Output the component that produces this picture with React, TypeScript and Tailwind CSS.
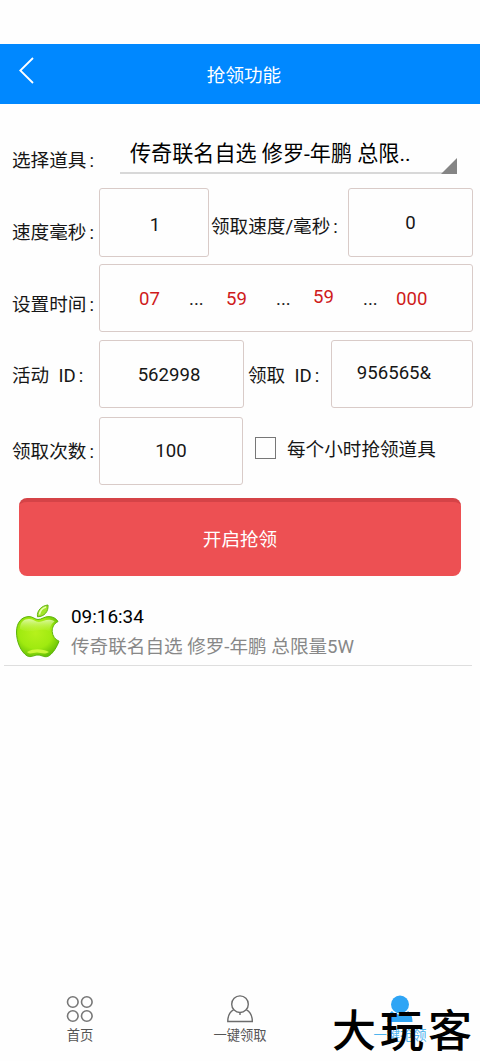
import React from "react"

const FONT = "font-[Roboto,'Noto_Sans_CJK_SC',sans-serif]"

interface FieldProps {
  value: string
  className?: string
}

const Field: React.FC<FieldProps> = ({ value, className = "" }) => {
  return (
    <div className={`flex items-center justify-center shrink-0 border border-[#d9cbc8] rounded-[3px] ${className}`}>
      {value}
    </div>
  )
}

interface LabelProps {
  text: string
  className?: string
}

const Label: React.FC<LabelProps> = ({ text, className = "" }) => {
  return (
    <div className={`flex shrink-0 whitespace-pre ${className}`}>
      <span>{text}</span>
      <span className="w-2 pl-[3px]">:</span>
    </div>
  )
}

const AppleIcon: React.FC = () => {
  return (
    <svg width="46" height="56" viewBox="0 0 46 56" className="shrink-0">
      <defs>
        <radialGradient id="skin" cx="0.45" cy="0.4" r="0.65">
          <stop offset="0" stopColor="#b6f11c" />
          <stop offset="0.6" stopColor="#a0ea10" />
          <stop offset="1" stopColor="#62bd05" />
        </radialGradient>
        <linearGradient id="shine" x1="0" y1="0" x2="0" y2="1">
          <stop offset="0" stopColor="#f4ffd8" />
          <stop offset="1" stopColor="#c3f54a" stopOpacity="0.2" />
        </linearGradient>
      </defs>
      <path
        d="M23 15.5C27 15.5 29 12.5 34 12.6C38.500 12.7 41.500 15 43 17.500C39 20 37 23 37.200 27.500C37.500 32 40 35.500 44 37.200C42 43 38 49 34.500 51.500C30 54.500 27 51 23 51C19 51 16 54 12 51.800C6 48 1.500 38 1.500 28C1.500 18 7 12.600 14 12.600C18 12.600 20 15.500 23 15.500Z"
        fill="url(#skin)" stroke="#5db30b" strokeWidth="1"
      />
      <path d="M5 25C5 18 9 15 14 15C19 15 20 18 24 18C28 18 31 15 36 16C38 16.400 39 17 39.500 17.500C35 21 35 24 34.500 27C25 23 15 31 5 25Z" fill="url(#shine)" opacity="0.75" />
      <path d="M12 48C19 44 28 45 34 48C29 51 26 48.500 22 48.500C18 48.500 15 51 12 48Z" fill="#dcff45" opacity="0.8" />
      <path d="M22.500 12.800C21.500 6.500 27 1.500 33 1C33.600 7.500 29.500 12.600 22.500 12.800Z" fill="#a2e52b" stroke="#62b30e" strokeWidth="1" />
      <path d="M24.500 10.500C25 7 28 4 31 3" fill="none" stroke="#e8ffb0" strokeWidth="1.500" />
    </svg>
  )
}

const GridIcon: React.FC = () => {
  return (
    <svg width="28" height="28" viewBox="0 0 28 28" fill="none" stroke="#777" strokeWidth="1.6">
      <circle cx="6.800" cy="7" r="5.300" />
      <circle cx="20.800" cy="7" r="5.300" />
      <circle cx="6.800" cy="21" r="5.300" />
      <circle cx="20.800" cy="21" r="5.300" />
    </svg>
  )
}

const UserIcon: React.FC<{ active?: boolean }> = ({ active }) => {
  if (active) {
    return (
      <svg width="28" height="28" viewBox="0 0 28 28" fill="#2fa5f5">
        <circle cx="14" cy="9.500" r="9" />
        <path d="M6 16C9 20.500 19 20.500 22 16C25 18 26.500 22 26.500 27H1.500C1.500 22 3 18 6 16Z" />
      </svg>
    )
  }
  return (
    <svg width="28" height="28" viewBox="0 0 28 28" fill="none" stroke="#6c6c6c" strokeWidth="1.4">
      <circle cx="14" cy="9.200" r="8.300" />
      <path d="M7.500 14.800C3.500 17 1.800 21 1.800 26.500H26.300C26.300 21 24.500 17 20.500 14.800M14 17.500V20" />
    </svg>
  )
}

const tabs = [
  { name: "首页", icon: <GridIcon />, color: "text-[#555]" },
  { name: "一键领取", icon: <UserIcon />, color: "text-[#555]" },
  { name: "一键抢领", icon: <UserIcon active />, color: "text-[#4eb4ee]" },
]

const App: React.FC = () => {
  return (
    <div className={`relative flex flex-col w-[480px] h-[1061px] overflow-hidden bg-[#fefefe] text-[18.6px] leading-[26px] text-[#161616] ${FONT}`}>
      {/* title bar */}
      <div className="mt-11 h-[60px] shrink-0 bg-[#0088ff] grid grid-cols-[60px_1fr_52px] text-white">
        <svg width="30" height="40" viewBox="0 0 30 40" className="ml-3 mt-[7px]" fill="none" stroke="#fff" strokeWidth="1.8">
          <path d="M21 7L8.300 19.500L21 32" />
        </svg>
        <div className="pt-[19px] text-center">抢领功能</div>
      </div>

      {/* prop picker */}
      <div className="flex h-[84px] shrink-0 pl-3">
        <Label text="选择道具" className="w-[108px] pt-[44px]" />
        <div className="flex items-end justify-between w-[337px] h-[70px] border-b-2 border-[#d8d8d8] pl-[10px] pb-[4px] text-[21.1px] leading-[28px] text-black whitespace-nowrap">
          <span>传奇联名自选 修罗-年鹏 总限..</span>
          <svg width="16" height="16" viewBox="0 0 16 16" className="-mb-[6px] shrink-0">
            <path d="M16 0V16H0Z" fill="#858585" />
          </svg>
        </div>
      </div>

      {/* speed */}
      <div className="flex h-[76px] shrink-0 pl-3">
        <Label text="速度毫秒" className="w-[87px] pt-[32px]" />
        <Field value="1" className="w-[110px] h-[69px] pt-[5px] pl-[2px]" />
        <Label text="领取速度/毫秒" className="w-[139px] pl-[2px] pt-[26px]" />
        <Field value="0" className="w-[125px] h-[69px]" />
      </div>

      {/* start time */}
      <div className="flex h-[76px] shrink-0 pl-3">
        <Label text="设置时间" className="w-[87px] pt-[28px]" />
        <div className="flex w-[374px] h-[68px] border border-[#d9cbc8] rounded-[3px] pl-[39px] pt-[21px] text-[#cf1b1b]">
          <span className="w-[50px]">07</span>
          <span className="w-[37px] text-[#222]">...</span>
          <span className="w-[50px]">59</span>
          <span className="w-[37px] text-[#222]">...</span>
          <span className="w-[50px] -mt-[2px]">59</span>
          <span className="w-[33px] text-[#222]">...</span>
          <span>000</span>
        </div>
      </div>

      {/* ids */}
      <div className="flex h-[76px] shrink-0 pl-3">
        <Label text="活动  ID" className="w-[87px] pt-[23px]" />
        <Field value="562998" className="w-[145px] h-[68px] pt-[2px] pr-[5px]" />
        <Label text="领取  ID" className="w-[87px] pl-1 pt-[23px]" />
        <Field value="956565&" className="w-[142px] h-[68px] pr-4 pb-[2px]" />
      </div>

      {/* repeat */}
      <div className="flex h-[82px] shrink-0 pl-3">
        <Label text="领取次数" className="w-[87px] pt-[23px]" />
        <Field value="100" className="w-[144px] h-[68px] mt-[1px]" />
        <div className="flex items-center h-[68px] pl-3 gap-[11px]">
          <div className="w-[21px] h-[22px] border border-[#777] -mt-[4px]"></div>
          <span>每个小时抢领道具</span>
        </div>
      </div>

      <button className="mx-[19px] h-[78px] shrink-0 rounded-lg bg-[#ed5053] border-t-4 border-[#d54347] text-white pt-[2px]">
        开启抢领
      </button>

      {/* log */}
      <div className="mx-1 w-[468px] h-[90px] shrink-0 flex pl-[11px] border-b border-[#dedede]">
        <div className="pt-[28px]"><AppleIcon /></div>
        <div className="pt-[28px] pl-[10px]">
          <div className="text-[18.9px] text-black">09:16:34</div>
          <div className="mt-[4px] text-[#888]">传奇联名自选 修罗-年鹏 总限量5W</div>
        </div>
      </div>

      {/* tabs */}
      <div className="mt-auto h-[66px] shrink-0 grid grid-cols-3 text-[13.3px] leading-[20px]">
        {
          tabs.map((tab) => (
            <div className={`flex flex-col items-center ${tab.color}`} key={tab.name}>
              {tab.icon}
              <span className="mt-[3px]">{tab.name}</span>
            </div>
          ))
        }
      </div>

      {/* site mark over the last tab */}
      <div className="absolute left-[332px] top-[1004px] text-[44px] leading-[56px] tracking-[4px] font-medium text-black whitespace-nowrap">
        大玩客
      </div>
    </div>
  )
}

export default App
